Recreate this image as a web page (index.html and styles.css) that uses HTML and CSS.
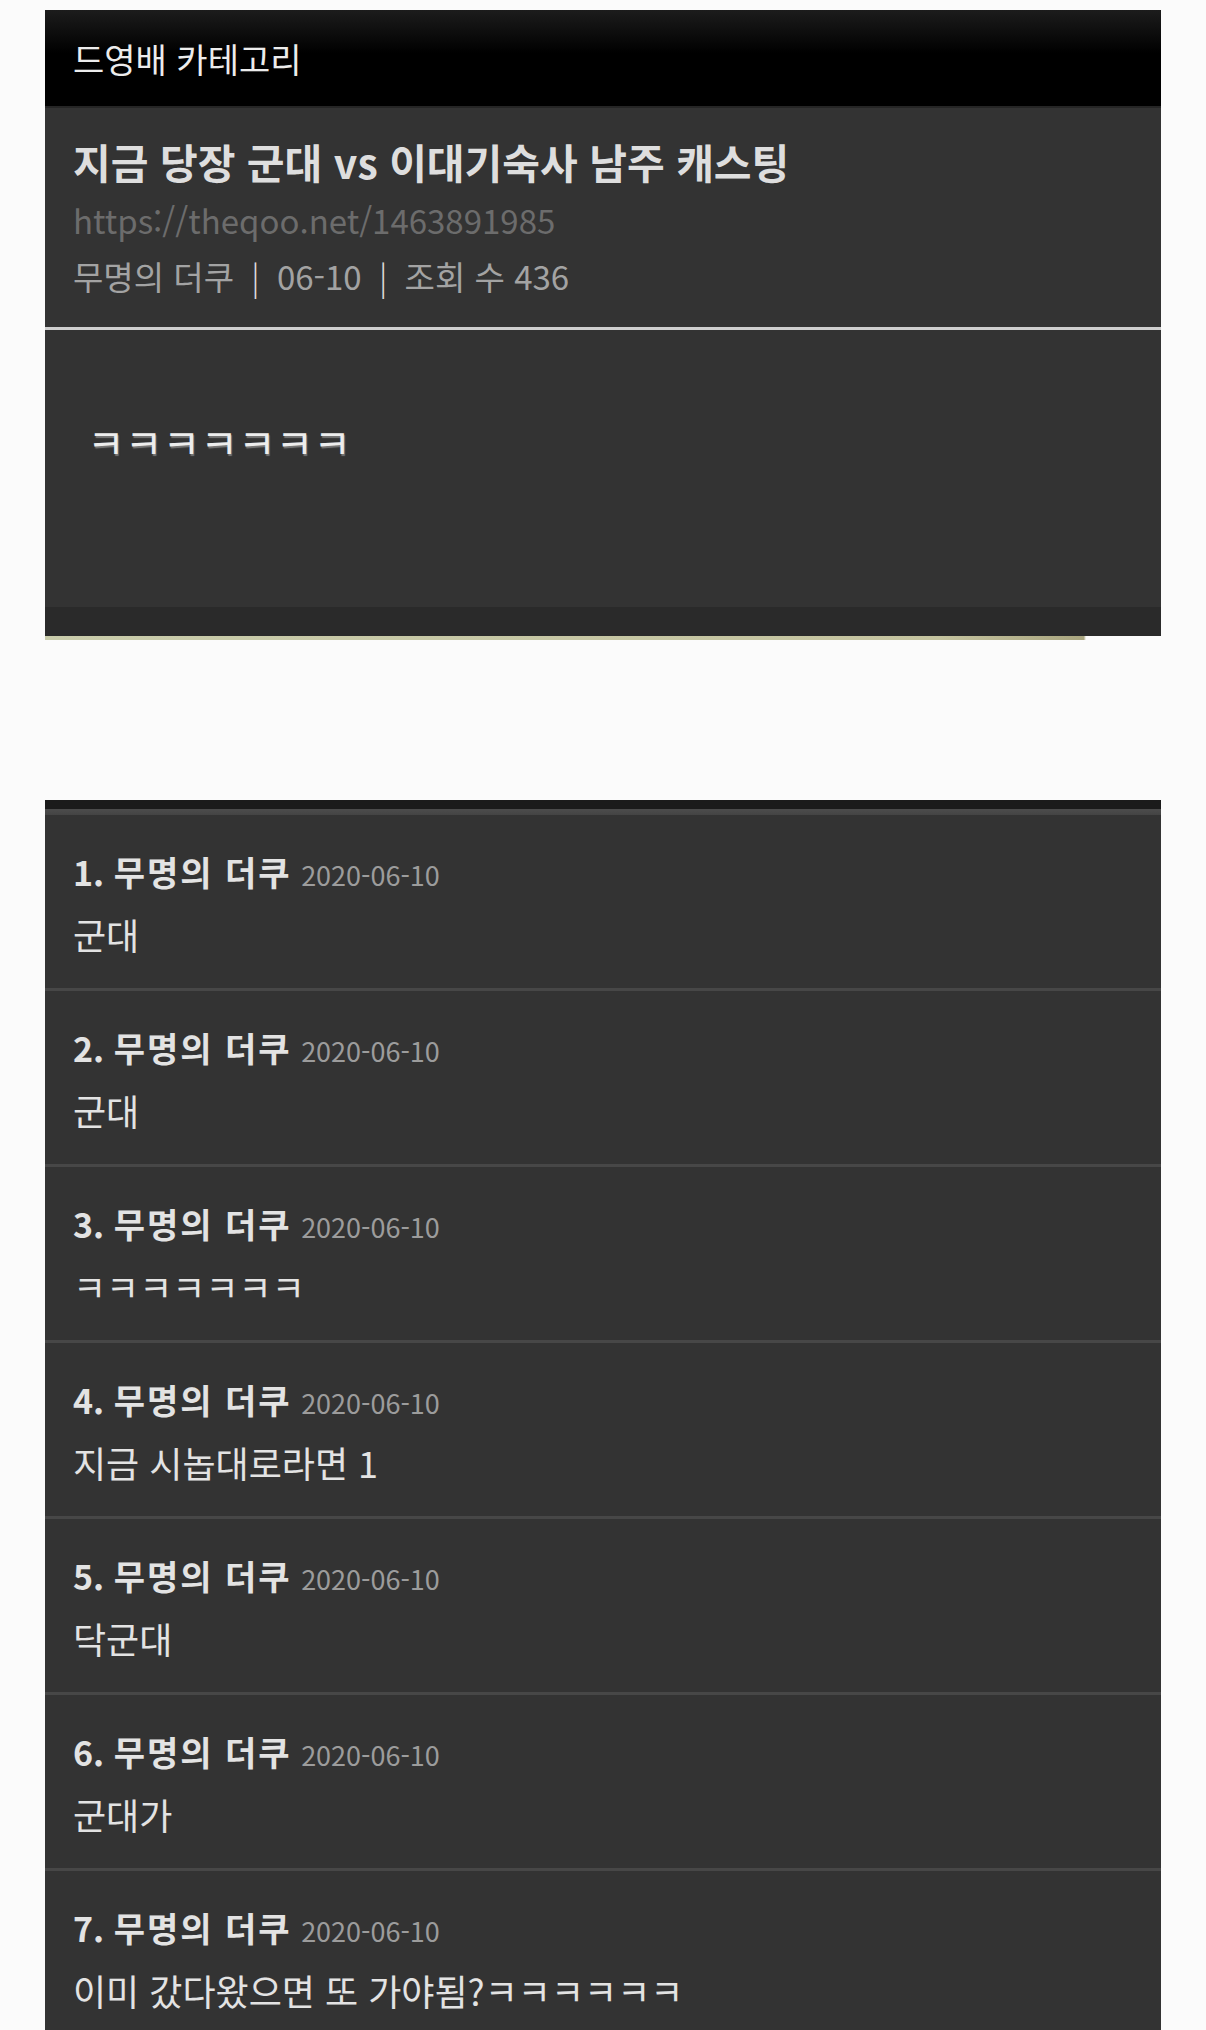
FILE: index.html
```html
<!DOCTYPE html>
<html lang="ko">
<head>
    <meta charset="UTF-8">
    <meta name="viewport" content="width=device-width, initial-scale=1.0">
    <title>지금 당장 군대 vs 이대기숙사 남주 캐스팅</title>
    <link rel="stylesheet" href="styles.css">
</head>
<body>
    <div class="page">
        <div class="post-card">
            <div class="category-bar">드영배 카테고리</div>
            <div class="post-head">
                <h1 class="post-title">지금 당장 군대 vs 이대기숙사 남주 캐스팅</h1>
                <div class="post-url">https://theqoo.net/1463891985</div>
                <div class="post-meta">
                    <span>무명의 더쿠</span>
                    <span class="bar">|</span>
                    <span>06-10</span>
                    <span class="bar">|</span>
                    <span>조회 수 436</span>
                </div>
            </div>
            <div class="post-body">
                <p>ㅋㅋㅋㅋㅋㅋㅋ</p>
            </div>
            <div class="post-foot"></div>
        </div>

        <div class="comment-card">
            <div class="comment">
                <div class="comment-head"><b>1. <span class="nick">무명의 더쿠</span></b> <span class="date">2020-06-10</span></div>
                <div class="comment-text">군대</div>
            </div>
            <div class="comment">
                <div class="comment-head"><b>2. <span class="nick">무명의 더쿠</span></b> <span class="date">2020-06-10</span></div>
                <div class="comment-text">군대</div>
            </div>
            <div class="comment">
                <div class="comment-head"><b>3. <span class="nick">무명의 더쿠</span></b> <span class="date">2020-06-10</span></div>
                <div class="comment-text">ㅋㅋㅋㅋㅋㅋㅋ</div>
            </div>
            <div class="comment">
                <div class="comment-head"><b>4. <span class="nick">무명의 더쿠</span></b> <span class="date">2020-06-10</span></div>
                <div class="comment-text">지금 시놉대로라면 1</div>
            </div>
            <div class="comment">
                <div class="comment-head"><b>5. <span class="nick">무명의 더쿠</span></b> <span class="date">2020-06-10</span></div>
                <div class="comment-text">닥군대</div>
            </div>
            <div class="comment">
                <div class="comment-head"><b>6. <span class="nick">무명의 더쿠</span></b> <span class="date">2020-06-10</span></div>
                <div class="comment-text">군대가</div>
            </div>
            <div class="comment">
                <div class="comment-head"><b>7. <span class="nick">무명의 더쿠</span></b> <span class="date">2020-06-10</span></div>
                <div class="comment-text">이미 갔다왔으면 또 가야됨?ㅋㅋㅋㅋㅋㅋ</div>
            </div>
        </div>
    </div>
</body>
</html>
```

FILE: styles.css
```css
body {
    margin: 0;
    background-color: #fbfbfb;
    font-family: "Noto Sans CJK KR", "Noto Sans", sans-serif;
    height: 2030px;
    overflow: hidden;
}
.page {
    padding: 10px 45px 0;
}
.post-card {
    background-color: #333;
}
.category-bar {
    height: 98px;
    line-height: 98px;
    padding-left: 28px;
    font-size: 34px;
    color: #ececec;
    background: linear-gradient(#1c1c1c, #000 45%, #000);
    border-bottom: 2px solid #252525;
    box-sizing: border-box;
}
.post-head {
    padding: 25px 28px 23px;
    border-bottom: 3px solid #cfcfcf;
}
.post-title {
    margin: 0;
    font-size: 41px;
    line-height: 56px;
    font-weight: bold;
    color: #dedede;
}
.post-url {
    margin-top: 3px;
    font-size: 33px;
    line-height: 56px;
    color: #6c6c6c;
}
.post-meta {
    font-size: 33px;
    line-height: 56px;
    color: #a3a3a3;
}
.post-meta .bar {
    color: #e0e0e0;
    font-weight: 300;
    margin: 0 8px;
}
.post-body {
    height: 277px;
    box-sizing: border-box;
    padding: 86px 42px 0;
}
.post-body p {
    margin: 0;
    font-size: 41px;
    line-height: 50px;
    color: #ededed;
    text-shadow: 1px 2px 1px #777;
}
.post-foot {
    height: 29px;
    background-color: #2a2a2a;
    border-bottom: 4px solid #c9caaa;
    border-image: linear-gradient(to right, #c9ccab, #c4c39f 80%, #a9a57f 93%, #fbfbfb 93.2%) 1;
}
.comment-card {
    margin-top: 160px;
    background-color: #333;
    border-top: 9px solid #1b1b1b;
}
.comment-card::before {
    content: "";
    display: block;
    height: 6px;
    background: linear-gradient(#4c4c4c, #444);
}
.comment {
    padding: 34px 28px 31px;
    border-bottom: 3px solid #474747;
}
.comment-head {
    height: 46px;
    font-size: 34px;
    line-height: 46px;
    color: #e3e3e3;
}
.comment-head .date {
    font-size: 27px;
    line-height: 1;
    color: #9c9c9c;
}
.comment-head .nick {
    letter-spacing: 2px;
}
.comment-text {
    margin-top: 16px;
    height: 46px;
    font-size: 36px;
    line-height: 46px;
    color: #e3e3e3;
}
```
